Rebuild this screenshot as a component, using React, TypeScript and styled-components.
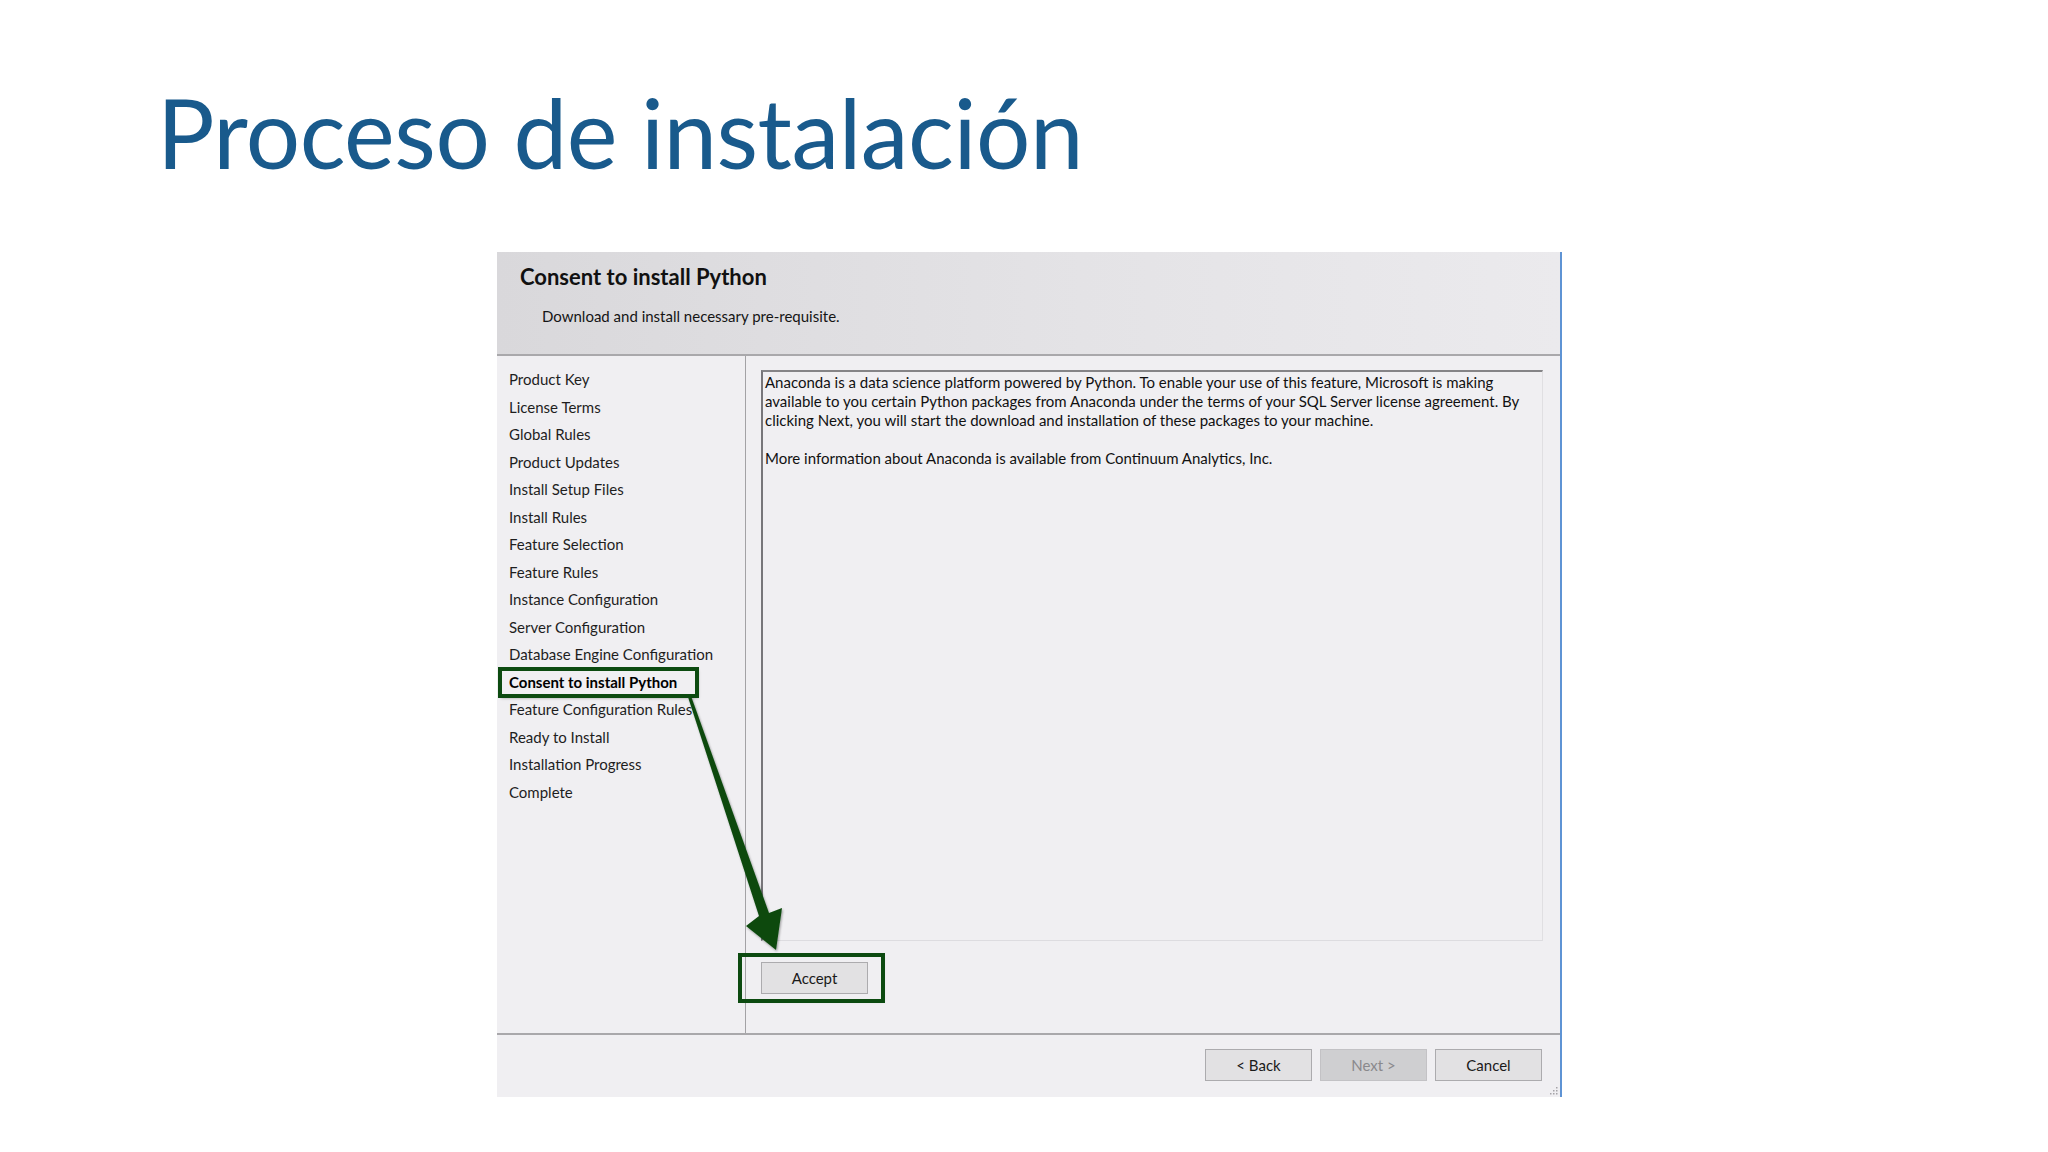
import React from 'react';
import styled, {createGlobalStyle} from 'styled-components';

const steps = [
    'Product Key',
    'License Terms',
    'Global Rules',
    'Product Updates',
    'Install Setup Files',
    'Install Rules',
    'Feature Selection',
    'Feature Rules',
    'Instance Configuration',
    'Server Configuration',
    'Database Engine Configuration',
    'Consent to install Python',
    'Feature Configuration Rules',
    'Ready to Install',
    'Installation Progress',
    'Complete',
];
const current = 'Consent to install Python';

const GlobalStyle = createGlobalStyle`
    html, body {
        margin: 0;
        background: #ffffff;
    }
    body {
        font-family: Lato, "Open Sans", sans-serif;
    }
`;

const Page = styled.div`
    width: 2048px;
    height: 1152px;
    overflow: hidden;
    display: flex;
    flex-direction: column;
`;

const Title = styled.h1`
    margin: 84px 0 0 157px;
    font-family: Lato, sans-serif;
    font-weight: 400;
    font-size: 96px;
    line-height: 96px;
    color: #195a8c;
    letter-spacing: -0.5px;
`;

const Dialog = styled.div`
    position: relative;
    margin: 72px 0 0 497px;
    width: 1063px;
    height: 845px;
    display: flex;
    flex-direction: column;
    background: #f0eff2;
    border-right: 2px solid #5e93d4;
    color: #151515;
`;

const Header = styled.div`
    height: 90px;
    padding: 12px 0 0 23px;
    background: linear-gradient(90deg, #d9d8db 0%, #e4e3e6 55%, #ebeaed 100%);
    border-bottom: 2px solid #a9a8ab;
`;

const HeaderTitle = styled.div`
    font-size: 22px;
    font-weight: 700;
    line-height: 26px;
    color: #111;
`;

const HeaderSub = styled.div`
    margin: 17px 0 0 22px;
    font-size: 15px;
    line-height: 18px;
`;

const Body = styled.div`
    flex: 1;
    display: flex;
    min-height: 0;
`;

const Sidebar = styled.ul`
    width: 249px;
    margin: 0;
    padding: 10px 0 0 12px;
    box-sizing: border-box;
    list-style: none;
    border-right: 1px solid #a3a2a5;
`;

const Step = styled.li<{$active?: boolean}>`
    height: 27.5px;
    line-height: 27.5px;
    font-size: 15px;
    white-space: nowrap;
    font-weight: ${p => p.$active ? 700 : 400};
    color: ${p => p.$active ? '#000' : '#1e1e1e'};
    ${p => p.$active && `
        width: fit-content;
        margin-left: -9px;
        padding: 0 20px 0 9px;
        outline: 4px solid #0c4a10;
        outline-offset: -2px;
        box-shadow: 1px 2px 3px rgba(0, 0, 0, 0.35);
    `}
`;

const Content = styled.div`
    flex: 1;
    display: flex;
    flex-direction: column;
    padding: 14px 17px 0 15px;
`;

const TextBox = styled.div`
    height: 566px;
    padding: 1px 2px;
    border-top: 2px solid #858487;
    border-left: 2px solid #77767a;
    border-right: 1px solid #e0dfe2;
    border-bottom: 1px solid #dddce0;
    font-size: 15px;
    line-height: 19px;
    color: #111;

    p {
        margin: 0 0 19px;
    }
`;

const ActionRow = styled.div`
    margin-top: 21px;
    display: flex;
`;

const Annotation = styled.span`
    display: inline-flex;
    padding: 5px 13px 5px 19px;
    margin: -5px 0 -5px -19px;
    outline: 4px solid #0c4a10;
    box-shadow: 2px 2px 3px rgba(0, 0, 0, 0.35);
`;

const Button = styled.button<{$disabled?: boolean}>`
    width: 107px;
    height: 32px;
    padding: 0;
    font-family: Lato, sans-serif;
    font-size: 15px;
    background: ${p => p.$disabled ? '#cfcfd1' : '#e2e1e3'};
    color: ${p => p.$disabled ? '#8a898c' : '#1a1a1a'};
    border: 1px solid ${p => p.$disabled ? '#c3c2c5' : '#acabae'};
    cursor: default;
`;

const Footer = styled.div`
    height: 64px;
    display: flex;
    justify-content: flex-end;
    align-items: flex-start;
    gap: 8px;
    padding: 14px 18px 0 0;
    box-sizing: border-box;
    border-top: 2px solid #a9a8ab;
`;

const Overlay = styled.svg`
    position: absolute;
    left: 0;
    top: 0;
    width: 1065px;
    height: 845px;
    pointer-events: none;
`;

const Grip = styled.svg`
    position: absolute;
    right: 2px;
    bottom: 2px;
    width: 10px;
    height: 10px;
`;

const Arrow = () =>
    <Overlay viewBox="0 0 1065 845">
        <defs>
            <filter id="arrowShadow" x="-20%" y="-20%" width="140%" height="140%">
                <feDropShadow dx="1" dy="1.5" stdDeviation="1.2" floodColor="#000" floodOpacity="0.35" />
            </filter>
        </defs>
        <polygon
            points="191,445 194,444 272,661 285,656 279,698 249,674 262,664"
            fill="#0c4a10"
            filter="url(#arrowShadow)"
        />
    </Overlay>;

export default function App() {
    return (
        <Page>
            <GlobalStyle />
            <Title>Proceso de instalación</Title>
            <Dialog>
                <Header>
                    <HeaderTitle>Consent to install Python</HeaderTitle>
                    <HeaderSub>Download and install necessary pre-requisite.</HeaderSub>
                </Header>
                <Body>
                    <Sidebar>
                        {steps.map(s => <Step key={s} $active={s === current}>{s}</Step>)}
                    </Sidebar>
                    <Content>
                        <TextBox>
                            <p>Anaconda is a data science platform powered by Python. To enable your use of this feature, Microsoft is making
                                available to you certain Python packages from Anaconda under the terms of your SQL Server license agreement. By
                                clicking Next, you will start the download and installation of these packages to your machine.</p>
                            <p>More information about Anaconda is available from Continuum Analytics, Inc.</p>
                        </TextBox>
                        <ActionRow>
                            <Annotation><Button>Accept</Button></Annotation>
                        </ActionRow>
                    </Content>
                </Body>
                <Footer>
                    <Button>&lt; Back</Button>
                    <Button $disabled>Next &gt;</Button>
                    <Button>Cancel</Button>
                </Footer>
                <Arrow />
                <Grip viewBox="0 0 10 10">
                    {[[8, 2], [8, 5], [5, 5], [8, 8], [5, 8], [2, 8]].map(([x, y]) =>
                        <rect key={`${x}-${y}`} x={x} y={y} width="1.5" height="1.5" fill="#a5a4a8" />)}
                </Grip>
            </Dialog>
        </Page>
    );
}
